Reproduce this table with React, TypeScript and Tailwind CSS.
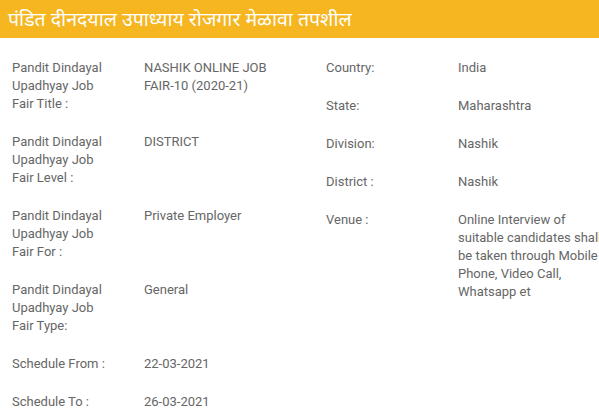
const leftRows = [
  { label: 'Pandit Dindayal Upadhyay Job Fair Title :', value: 'NASHIK ONLINE JOB FAIR-10 (2020-21)' },
  { label: 'Pandit Dindayal Upadhyay Job Fair Level :', value: 'DISTRICT' },
  { label: 'Pandit Dindayal Upadhyay Job Fair For :', value: 'Private Employer' },
  { label: 'Pandit Dindayal Upadhyay Job Fair Type:', value: 'General' },
  { label: 'Schedule From :', value: '22-03-2021' },
  { label: 'Schedule To :', value: '26-03-2021' },
]

const rightRows = [
  { label: 'Country:', value: 'India' },
  { label: 'State:', value: 'Maharashtra' },
  { label: 'Division:', value: 'Nashik' },
  { label: 'District :', value: 'Nashik' },
  {
    label: 'Venue :',
    value: 'Online Interview of suitable candidates shall be taken through Mobile Phone, Video Call, Whatsapp et',
  },
]

function Row({ label, value }: { label: string; value: string }) {
  return (
    <div className="flex mb-5">
      <div className="w-[132px] shrink-0 pr-8">{label}</div>
      <div className="w-[150px] shrink-0">{value}</div>
    </div>
  )
}

export default function App() {
  return (
    <div className="w-[599px] h-[416px] overflow-hidden bg-white font-['Roboto',sans-serif]">
      <div className="h-[38px] bg-[#f5b61f] flex items-center px-2">
        <h1 className="text-white text-[19.5px] leading-none font-['Noto_Sans','Noto_Sans_Devanagari',sans-serif]">
          पंडित दीनदयाल उपाध्याय रोजगार मेळावा तपशील
        </h1>
      </div>
      <div className="flex pt-[21px] pl-3 text-[13px] leading-[18px] text-[#666]">
        <div className="w-[314px] shrink-0">
          {leftRows.map(r => (
            <Row key={r.label} {...r} />
          ))}
        </div>
        <div className="w-[300px] shrink-0">
          {rightRows.map(r => (
            <Row key={r.label} {...r} />
          ))}
        </div>
      </div>
    </div>
  )
}
